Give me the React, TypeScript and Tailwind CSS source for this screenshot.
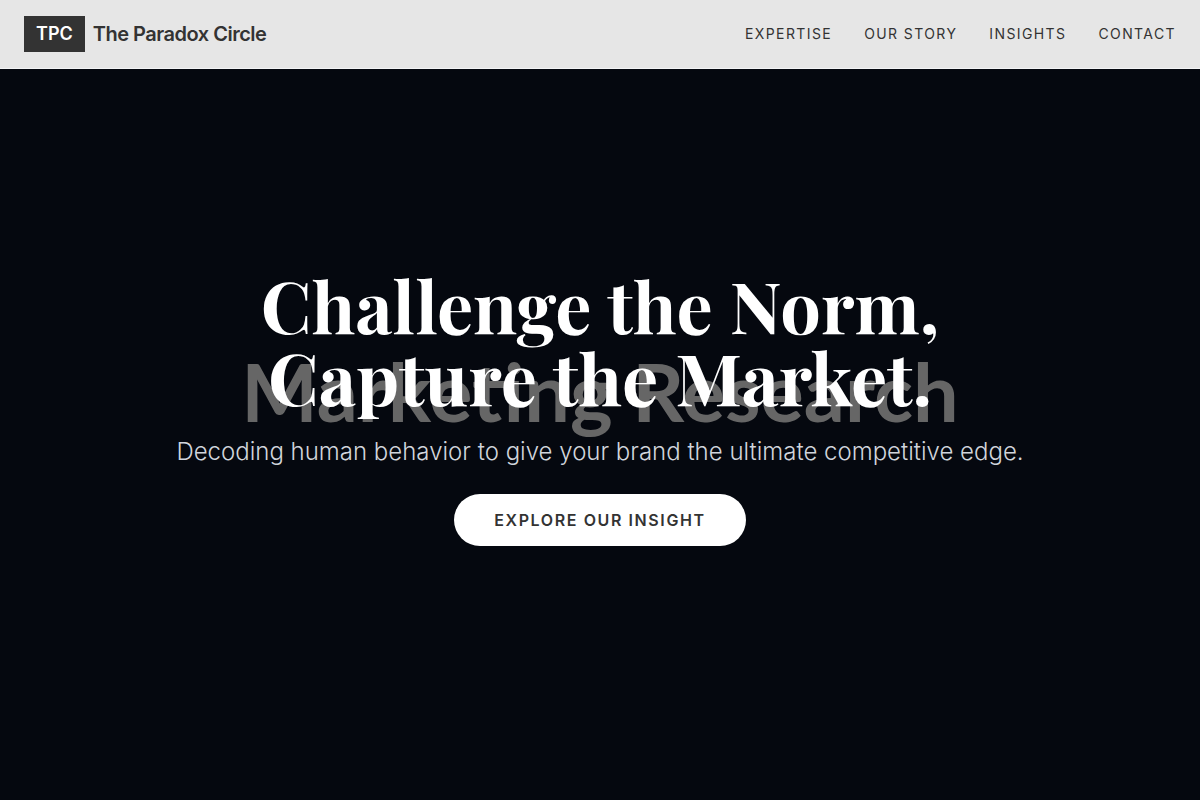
const links = ["Expertise", "Our Story", "Insights", "Contact"];

export default function App() {
  return (
    <div className="bg-[#05080f] font-['Inter',sans-serif]">
      <header className="fixed inset-x-0 top-0 z-10 flex items-center justify-between border-b border-gray-100 bg-[#e6e6e6] px-6 py-4 text-[#333333]">
        <a href="#home" className="flex items-center gap-2">
          <span className="bg-[#333333] px-3 py-1 text-lg font-semibold text-white">TPC</span>
          <span className="text-xl font-semibold tracking-tight">The Paradox Circle</span>
        </a>
        <nav className="flex gap-8">
          {links.map((label) => (
            <a key={label} href="#section" className="text-sm tracking-widest uppercase">
              {label}
            </a>
          ))}
        </nav>
      </header>
      <main className="relative flex min-h-screen flex-col items-center justify-center px-6 text-center">
        <div
          aria-hidden="true"
          className="absolute inset-0 flex items-center justify-center pb-[18px] font-['Lato',sans-serif] text-[81px] font-bold text-[#666666]"
        >
          Marketing Research
        </div>
        <div className="relative">
          <h1 className="font-['Playfair_Display','Liberation_Serif',serif] text-7xl leading-none font-bold text-white">
            Challenge the Norm,
            <br />
            Capture the Market.
          </h1>
          <p className="mt-6 mb-10 text-2xl font-light text-gray-300">
            Decoding human behavior to give your brand the ultimate competitive edge.
          </p>
          <a
            href="#insight"
            className="rounded-full bg-white px-10 py-4 font-semibold tracking-widest text-[#333333] uppercase"
          >
            Explore Our Insight
          </a>
        </div>
      </main>
    </div>
  );
}
